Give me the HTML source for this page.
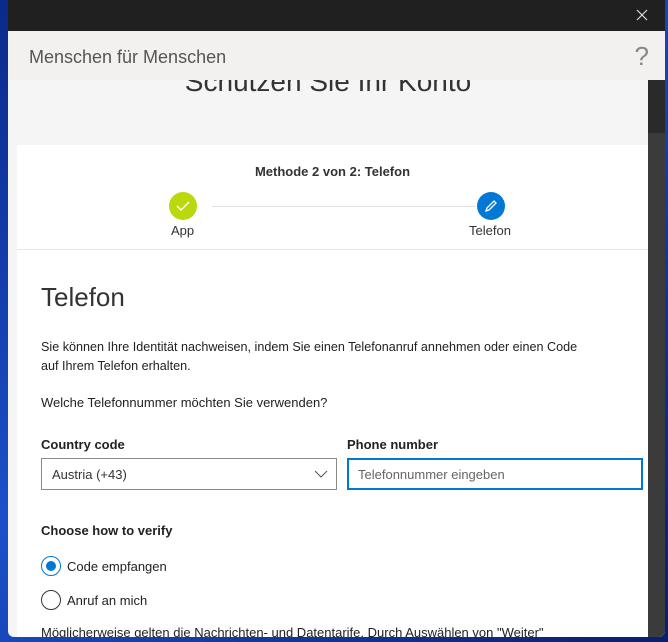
<!DOCTYPE html>
<html><head><meta charset="utf-8"><style>
*{box-sizing:border-box;margin:0;padding:0}
body{width:668px;height:642px;overflow:hidden;background:linear-gradient(135deg,#0a2a8a,#1b4fc9 40%,#0a1f6b);font-family:"Liberation Sans",sans-serif;position:relative}
.win{position:absolute;left:8px;top:0;width:657px;height:637px;background:#f5f5f5;border-radius:0 0 6px 6px;overflow:hidden}
.tb{height:31px;background:#202020;position:relative;z-index:5}
.x{position:absolute;right:17px;top:9px}
.hd{position:absolute;left:0;top:31px;width:100%;height:49px;background:#f2f1f0;z-index:5}
.hd .t{position:absolute;left:21px;top:16px;font-size:18px;color:#555}
.hd .q{position:absolute;right:16px;top:10px;font-size:26px;color:#888;font-weight:300}
.big{position:absolute;top:66px;left:0;width:640px;text-align:center;font-size:28px;color:#333;z-index:0}
.sb{position:absolute;right:0;top:80px;width:17px;bottom:0;background:#3b3b3b}
.sb div{height:53px;background:#2a2a2a}
.card{position:absolute;left:9px;top:145px;width:631px;height:500px;background:#fff}
.steps{height:105px;border-bottom:1px solid #e6e6e6;position:relative}
.m{position:absolute;top:19px;width:100%;text-align:center;font-size:13px;font-weight:bold;color:#333}
.line{position:absolute;left:195px;top:61px;width:264px;height:1px;background:#e1e1e1}
.c{position:absolute;top:47px;width:28px;height:28px;border-radius:50%}
.lb{position:absolute;top:78px;font-size:13px;color:#333}
.h{position:absolute;left:24px;top:137px;font-size:26px;font-weight:300;color:#333}
.p{position:absolute;left:24px;font-size:13px;color:#222;line-height:19px;white-space:nowrap}
.lbl{position:absolute;top:292px;font-size:13px;font-weight:bold;color:#222}
.in{position:absolute;top:313px;height:32px;border:1px solid #8a8a8a;font-size:13px;color:#333;padding:8px 10px}
.r{position:absolute;left:24px;width:20px;height:20px;border-radius:50%;border:1px solid #333}
</style></head><body>
<div class="win">
<div class="tb"><svg class="x" width="12" height="12"><path d="M1 1l10 10M11 1L1 11" stroke="#ddd" stroke-width="1.2"/></svg></div>
<div class="big">Schützen Sie Ihr Konto</div>
<div class="hd"><span class="t">Menschen für Menschen</span><span class="q">?</span></div>
<div class="sb"><div></div></div>
<div class="card">
 <div class="steps">
  <div class="m">Methode 2 von 2: Telefon</div>
  <div class="line"></div>
  <div class="c" style="left:152px;background:#bad80a"><svg width="28" height="28"><path d="M8 14l4 4 8-8" stroke="#fff" stroke-width="1.5" fill="none"/></svg></div>
  <div class="lb" style="left:154px">App</div>
  <div class="c" style="left:460px;background:#0078d4"><svg width="28" height="28"><path d="M9 19l1-3 7-7 2 2-7 7z" stroke="#fff" stroke-width="1.3" fill="none"/></svg></div>
  <div class="lb" style="left:452px">Telefon</div>
 </div>
 <div class="h">Telefon</div>
 <div class="p" style="top:193px;font-size:12.6px">Sie können Ihre Identität nachweisen, indem Sie einen Telefonanruf annehmen oder einen Code<br>auf Ihrem Telefon erhalten.</div>
 <div class="p" style="top:248px">Welche Telefonnummer möchten Sie verwenden?</div>
 <div class="lbl" style="left:24px">Country code</div>
 <div class="lbl" style="left:330px">Phone number</div>
 <div class="in" style="left:24px;width:296px">Austria (+43)<svg style="position:absolute;right:8px;top:10px" width="14" height="10"><path d="M1 2l6 6 6-6" stroke="#555" fill="none"/></svg></div>
 <div class="in" style="left:330px;width:296px;border:2px solid #0078d4;color:#666;padding:7px 9px">Telefonnummer eingeben</div>
 <div class="lbl" style="left:24px;top:378px">Choose how to verify</div>
 <div class="r" style="top:411px;border-color:#0078d4"><div style="width:10px;height:10px;border-radius:50%;background:#0078d4;margin:4px"></div></div>
 <div class="p" style="left:50px;top:412px">Code empfangen</div>
 <div class="r" style="top:445px"></div>
 <div class="p" style="left:50px;top:446px">Anruf an mich</div>
 <div class="p" style="top:478px">Möglicherweise gelten die Nachrichten- und Datentarife. Durch Auswählen von "Weiter"</div>
</div>
</div>
</body></html>
